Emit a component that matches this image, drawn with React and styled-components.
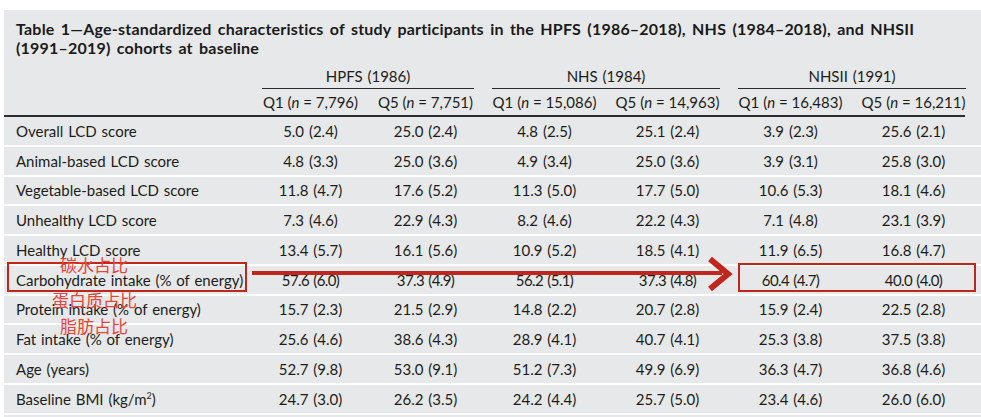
import styled, { createGlobalStyle } from 'styled-components';

const GlobalStyle = createGlobalStyle`
  html, body {
    margin: 0;
    padding: 0;
    background: #ffffff;
  }
  body {
    font-family: Lato, "Liberation Sans", sans-serif;
    color: #1c1c1c;
  }
`;

const Page = styled.div`
  width: 981px;
  height: 417px;
  overflow: hidden;
  background: #ffffff;
`;

const Panel = styled.div`
  position: relative;
  margin: 10px 0 0 4px;
  height: 407px;
  background: #e7e8e9;
`;

const Title = styled.h1`
  margin: 0;
  padding: 9px 0 0 12px;
  font-size: 16px;
  line-height: 19px;
  font-weight: 700;
  letter-spacing: 0.2px;
  word-spacing: 2.2px;
  color: #1a1a1a;
`;

const COLS = '240px 97px 97px 105px 105px 105px 105px';

const GroupRow = styled.div`
  display: grid;
  grid-template-columns: ${COLS};
  column-gap: 18px;
  margin-top: 10px;
  height: 22px;
`;

const GroupCell = styled.div`
  grid-column: ${({ $start }) => `${$start} / span 2`};
  text-align: center;
  font-size: 15px;
  line-height: 19px;
  word-spacing: 1px;
  border-bottom: 1.5px solid #2a2a2a;
`;

const SubRow = styled.div`
  display: grid;
  grid-template-columns: ${COLS};
  column-gap: 18px;
  height: 26px;
  margin-right: 16px;
  border-bottom: 2.5px solid #2e2e2e;
  align-items: center;
`;

const SubCell = styled.div`
  text-align: center;
  font-size: 15px;
  white-space: nowrap;
  padding-bottom: 1px;

  em {
    font-style: italic;
  }
`;

const Row = styled.div`
  display: grid;
  grid-template-columns: ${COLS};
  column-gap: 18px;
  align-items: center;
  height: 27.75px;
  border-bottom: 2px solid #ffffff;
`;

const Label = styled.div`
  padding-left: 12px;
  font-size: 15px;
  word-spacing: 1px;
  white-space: nowrap;

  sup {
    font-size: 9px;
    line-height: 0;
  }
`;

const Value = styled.div`
  text-align: center;
  font-size: 15px;
  word-spacing: 1px;
  white-space: nowrap;
  letter-spacing: ${({ $tight }) => ($tight ? '-0.6px' : '0')};
`;

const Note = styled.div`
  position: absolute;
  left: ${({ $x }) => $x}px;
  top: ${({ $y }) => $y}px;
  font-family: "Noto Sans CJK SC", sans-serif;
  font-weight: 400;
  font-size: 17px;
  line-height: 17px;
  color: #e5453b;
  white-space: nowrap;
`;

const Box = styled.div`
  position: absolute;
  left: ${({ $x }) => $x}px;
  top: ${({ $y }) => $y}px;
  width: ${({ $w }) => $w}px;
  height: ${({ $h }) => $h}px;
  border: 2px solid #c0261c;
  box-sizing: border-box;
`;

const Arrow = styled.svg`
  position: absolute;
  left: 244px;
  top: 244px;
`;

const rows = [
  { label: 'Overall LCD score', values: ['5.0 (2.4)', '25.0 (2.4)', '4.8 (2.5)', '25.1 (2.4)', '3.9 (2.3)', '25.6 (2.1)'] },
  { label: 'Animal-based LCD score', values: ['4.8 (3.3)', '25.0 (3.6)', '4.9 (3.4)', '25.0 (3.6)', '3.9 (3.1)', '25.8 (3.0)'] },
  { label: 'Vegetable-based LCD score', values: ['11.8 (4.7)', '17.6 (5.2)', '11.3 (5.0)', '17.7 (5.0)', '10.6 (5.3)', '18.1 (4.6)'] },
  { label: 'Unhealthy LCD score', values: ['7.3 (4.6)', '22.9 (4.3)', '8.2 (4.6)', '22.2 (4.3)', '7.1 (4.8)', '23.1 (3.9)'] },
  { label: 'Healthy LCD score', values: ['13.4 (5.7)', '16.1 (5.6)', '10.9 (5.2)', '18.5 (4.1)', '11.9 (6.5)', '16.8 (4.7)'] },
  { label: 'Carbohydrate intake (% of energy)', values: ['57.6 (6.0)', '37.3 (4.9)', '56.2 (5.1)', '37.3 (4.8)', '60.4 (4.7)', '40.0 (4.0)'], tight: true },
  { label: 'Protein intake (% of energy)', values: ['15.7 (2.3)', '21.5 (2.9)', '14.8 (2.2)', '20.7 (2.8)', '15.9 (2.4)', '22.5 (2.8)'] },
  { label: 'Fat intake (% of energy)', values: ['25.6 (4.6)', '38.6 (4.3)', '28.9 (4.1)', '40.7 (4.1)', '25.3 (3.8)', '37.5 (3.8)'] },
  { label: 'Age (years)', values: ['52.7 (9.8)', '53.0 (9.1)', '51.2 (7.3)', '49.9 (6.9)', '36.3 (4.7)', '36.8 (4.6)'] },
  { label: <>Baseline BMI (kg/m<sup>2</sup>)</>, values: ['24.7 (3.0)', '26.2 (3.5)', '24.2 (4.4)', '25.7 (5.0)', '23.4 (4.6)', '26.0 (6.0)'] },
];

const subheads = [
  ['Q1', '7,796'], ['Q5', '7,751'],
  ['Q1', '15,086'], ['Q5', '14,963'],
  ['Q1', '16,483'], ['Q5', '16,211'],
];

export default function App() {
  return (
    <Page>
      <GlobalStyle />
      <Panel>
        <Title>
          Table 1—Age-standardized characteristics of study participants in the HPFS (1986–2018), NHS (1984–2018), and NHSII
          <br />
          (1991–2019) cohorts at baseline
        </Title>
        <GroupRow>
          <GroupCell $start={2}>HPFS (1986)</GroupCell>
          <GroupCell $start={4}>NHS (1984)</GroupCell>
          <GroupCell $start={6}>NHSII (1991)</GroupCell>
        </GroupRow>
        <SubRow>
          <div />
          {subheads.map(([q, n]) => (
            <SubCell key={q + n}>
              {q} (<em>n</em> = {n})
            </SubCell>
          ))}
        </SubRow>
        {rows.map((row, i) => (
          <Row key={i}>
            <Label>{row.label}</Label>
            {row.values.map((v, j) => (
              <Value key={j} $tight={row.tight}>{v}</Value>
            ))}
          </Row>
        ))}

        <Box $x={3} $y={252} $w={240} $h={30} />
        <Box $x={734} $y={253} $w={238} $h={29} />
        <Arrow width="500" height="50" viewBox="0 0 500 50">
          <line x1="4" y1="19" x2="474" y2="19" stroke="#c0261c" strokeWidth="4" />
          <polyline points="462,5 480,20 462,35" fill="none" stroke="#c0261c" strokeWidth="6" />
        </Arrow>

        <Note $x={56} $y={246}>碳水占比</Note>
        <Note $x={48} $y={281}>蛋白质占比</Note>
        <Note $x={56} $y={307}>脂肪占比</Note>
      </Panel>
    </Page>
  );
}
